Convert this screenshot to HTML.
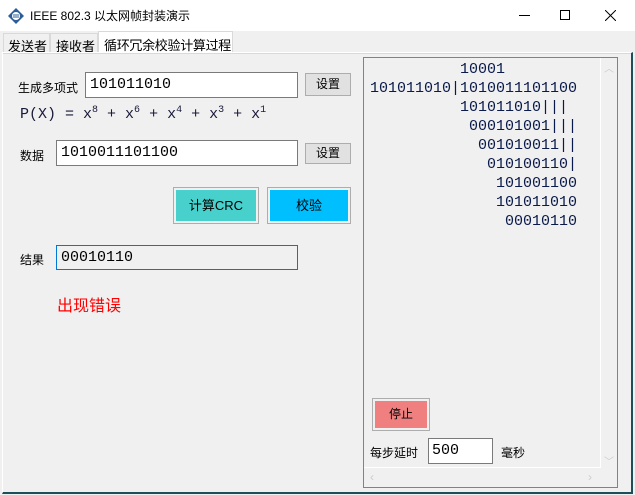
<!DOCTYPE html>
<html><head><meta charset="utf-8"><style>
*{box-sizing:border-box;margin:0;padding:0}
body{width:635px;height:495px;overflow:hidden;background:#f0f0f0;font-family:"Liberation Sans","Noto Sans CJK SC",sans-serif;font-size:12px;color:#000;position:relative}
.a{position:absolute;white-space:nowrap}
.mono{font-family:"Liberation Mono","DejaVu Sans Mono",monospace}
.inp{position:absolute;background:#fff;border:1px solid #7a7a7a;font-family:"Liberation Mono",monospace;font-size:15px;padding-left:4px;line-height:24px;color:#000}
.btn{position:absolute;background:#e1e1e1;border:1px solid #adadad;text-align:center}
.s{font-size:10px;position:relative;top:-6px}
</style></head><body>
<div class="a" style="left:0;top:0;width:635px;height:31px;background:#fff"></div>
<svg class="a" style="left:8px;top:8px" width="16" height="16"><path d="M8 0L16 8L8 16L0 8Z" fill="#2a5d9a"/><circle cx="8" cy="8" r="4" fill="#fff"/><path d="M6 6v4M8 6v4M10 6v4" stroke="#2a5d9a"/></svg>
<div class="a" style="left:30px;top:7px;font-size:12px">IEEE 802.3 以太网帧封装演示</div>
<div class="a" style="left:519px;top:15px;width:11px;height:1px;background:#000"></div>
<div class="a" style="left:560px;top:10px;width:10px;height:10px;border:1px solid #000"></div>
<svg class="a" style="left:605px;top:10px" width="11" height="11"><path d="M0 0L11 11M11 0L0 11" stroke="#000"/></svg>
<div class="a" style="left:3px;top:33px;width:47px;height:19px;border:1px solid #d9d9d9;border-bottom:none;padding:2px 0 0 4px;font-size:13px">发送者</div>
<div class="a" style="left:50px;top:33px;width:48px;height:19px;border:1px solid #d9d9d9;border-bottom:none;padding:2px 0 0 5px;font-size:13px">接收者</div>
<div class="a" style="left:98px;top:31px;width:135px;height:22px;background:#fff;border:1px solid #d9d9d9;border-bottom:none;padding:3px 0 0 5px;font-size:13px;letter-spacing:-0.3px">循环冗余校验计算过程</div>
<div class="a" style="left:2px;top:52px;width:631px;height:442px;border:1px solid #fff;border-right:2px solid #1d4f5a;border-bottom:2px solid #1d4f5a"></div>
<div class="a" style="left:3px;top:53px;width:628px;height:1px;background:#d9d9d9"></div>
<div class="a" style="left:18px;top:79px">生成多项式</div>
<div class="inp" style="left:85px;top:72px;width:213px;height:26px">101011010</div>
<div class="btn" style="left:305px;top:73px;width:46px;height:23px;line-height:21px">设置</div>
<div class="a mono" style="left:20px;top:106px;font-size:15px;color:#1a1a3a;white-space:pre">P(X) = x<span class="s">8</span> + x<span class="s">6</span> + x<span class="s">4</span> + x<span class="s">3</span> + x<span class="s">1</span></div>
<div class="a" style="left:20px;top:147px">数据</div>
<div class="inp" style="left:56px;top:140px;width:242px;height:26px">1010011101100</div>
<div class="btn" style="left:305px;top:143px;width:46px;height:21px;line-height:19px">设置</div>
<div class="a" style="left:173px;top:187px;width:86px;height:37px;border:1px solid #adadad;padding:2px"><div style="background:#48d1cc;height:31px;line-height:31px;text-align:center;font-size:13px">计算CRC</div></div>
<div class="a" style="left:267px;top:187px;width:84px;height:37px;border:1px solid #adadad;padding:2px"><div style="background:#00bfff;height:31px;line-height:31px;text-align:center;font-size:13px">校验</div></div>
<div class="a" style="left:20px;top:251px">结果</div>
<div class="inp" style="left:56px;top:245px;width:242px;height:25px;background:#f0f0f0;border-color:#0078d7;line-height:23px">00010110</div>
<div class="a" style="left:57px;top:292px;font-size:16px;color:#ff0000">出现错误</div>
<div class="a" style="left:363px;top:57px;width:255px;height:431px;border:1px solid #828282"></div>
<div class="a" style="left:600px;top:58px;width:17px;height:410px;border-left:1px solid #fff"></div>
<div class="a" style="left:364px;top:467px;width:236px;height:1px;background:#fff"></div>
<div class="a" style="left:604px;top:60px;color:#ccc;font-size:10px">︿</div>
<div class="a" style="left:604px;top:453px;color:#ccc;font-size:10px">﹀</div>
<div class="a" style="left:370px;top:470px;color:#ccc;font-size:12px">‹</div>
<div class="a" style="left:588px;top:470px;color:#ccc;font-size:12px">›</div>
<pre class="a mono" style="left:370px;top:60px;font-size:15px;line-height:19px;color:#0a1a4a;white-space:pre">          10001
101011010|1010011101100
          101011010|||
           000101001|||
            001010011||
             010100110|
              101001100
              101011010
               00010110</pre>
<div class="a" style="left:372px;top:398px;width:58px;height:33px;border:1px solid #adadad;padding:2px"><div style="background:#f08080;height:27px;line-height:27px;text-align:center;font-size:12px">停止</div></div>
<div class="a" style="left:370px;top:444px">每步延时</div>
<div class="inp" style="left:428px;top:438px;width:65px;height:26px;padding-left:3px">500</div>
<div class="a" style="left:501px;top:444px">毫秒</div>
</body></html>
